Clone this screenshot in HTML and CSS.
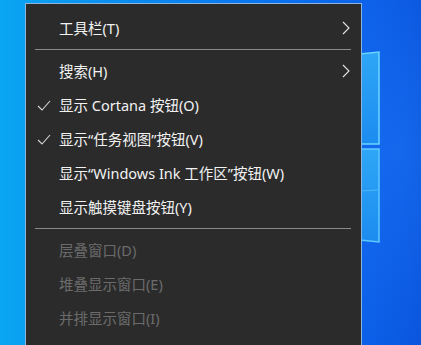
FILE: index.html
```html
<!DOCTYPE html>
<html lang="zh-CN">
<head>
<meta charset="utf-8">
<title>任务栏菜单</title>
<link rel="stylesheet" href="styles.css">
</head>
<body>
<svg class="logo" width="421" height="345" viewBox="0 0 421 345" aria-hidden="true">
  <defs>
    <linearGradient id="pane" x1="0" y1="0" x2="0" y2="1">
      <stop offset="0" stop-color="#2fa6f6"/>
      <stop offset="1" stop-color="#1c8cf0"/>
    </linearGradient>
  </defs>
  <polygon points="340,56 379,52 379,144 340,144" fill="url(#pane)" stroke="#6ad6ff" stroke-width="1.5"/>
  <polygon points="340,149 379,149 379,242 340,238" fill="url(#pane)" stroke="#5ccaff" stroke-width="1.5"/>
  <line x1="340" y1="192" x2="379" y2="190" stroke="#4bb8fb" stroke-width="1"/>
</svg>
<div class="menu">
  <div class="item"><span class="label">工具栏(T)</span><svg class="chev" width="8" height="14" viewBox="0 0 8 14"><polyline points="1,1 7,7 1,13" fill="none" stroke="#e6e6e6" stroke-width="1.1"/></svg></div>
  <div class="sep"></div>
  <div class="item"><span class="label">搜索(H)</span><svg class="chev" width="8" height="14" viewBox="0 0 8 14"><polyline points="1,1 7,7 1,13" fill="none" stroke="#e6e6e6" stroke-width="1.1"/></svg></div>
  <div class="item"><svg class="check" width="14" height="11" viewBox="0 0 14 11"><polyline points="1,6 5,10 13,1" fill="none" stroke="#d8d8d8" stroke-width="1.1"/></svg><span class="label">显示 Cortana 按钮(O)</span></div>
  <div class="item"><svg class="check" width="14" height="11" viewBox="0 0 14 11"><polyline points="1,6 5,10 13,1" fill="none" stroke="#d8d8d8" stroke-width="1.1"/></svg><span class="label">显示“任务视图”按钮(V)</span></div>
  <div class="item"><span class="label">显示“Windows Ink 工作区”按钮(W)</span></div>
  <div class="item"><span class="label">显示触摸键盘按钮(Y)</span></div>
  <div class="sep"></div>
  <div class="item disabled"><span class="label">层叠窗口(D)</span></div>
  <div class="item disabled"><span class="label">堆叠显示窗口(E)</span></div>
  <div class="item disabled"><span class="label">并排显示窗口(I)</span></div>
  <div class="item disabled"><span class="label">显示桌面(S)</span></div>
</div>
</body>
</html>
```
FILE: styles.css
```css
html, body {
  margin: 0;
  height: 100%;
  overflow: hidden;
}
body {
  position: relative;
  background:
    radial-gradient(ellipse 120px 200px at 400px 150px, rgba(40,130,255,0.35), rgba(40,130,255,0) 100%),
    linear-gradient(90deg, #0aa6f2 0%, #0a8cf0 30%, #0a6ff0 70%, #0b5fe8 88%, #0a55dc 100%);
  padding: 3px 0 0 25px;
  font-family: "Noto Sans", "Noto Sans CJK SC", sans-serif;
  box-sizing: border-box;
}
.logo {
  position: absolute;
  left: 0;
  top: 0;
}
.menu {
  position: relative;
  width: 337px;
  box-sizing: border-box;
  background: #2b2b2b;
  border: 1px solid #8fb6da;
  padding: 7px 0;
  min-height: 400px;
}
.item {
  position: relative;
  display: flex;
  align-items: center;
  height: 34px;
  padding-left: 33px;
  padding-right: 11px;
  color: #f2f2f2;
  font-size: 14.5px;
  line-height: 1;
}
.item .label {
  flex: 1;
  white-space: nowrap;
}
.item.disabled {
  color: #6b6b6b;
}
.check {
  position: absolute;
  left: 11px;
  top: 12px;
}
.chev {
  flex: none;
}
.sep {
  height: 1px;
  margin: 4px 10px 4px 9px;
  background: #8a8a8a;
}
```
